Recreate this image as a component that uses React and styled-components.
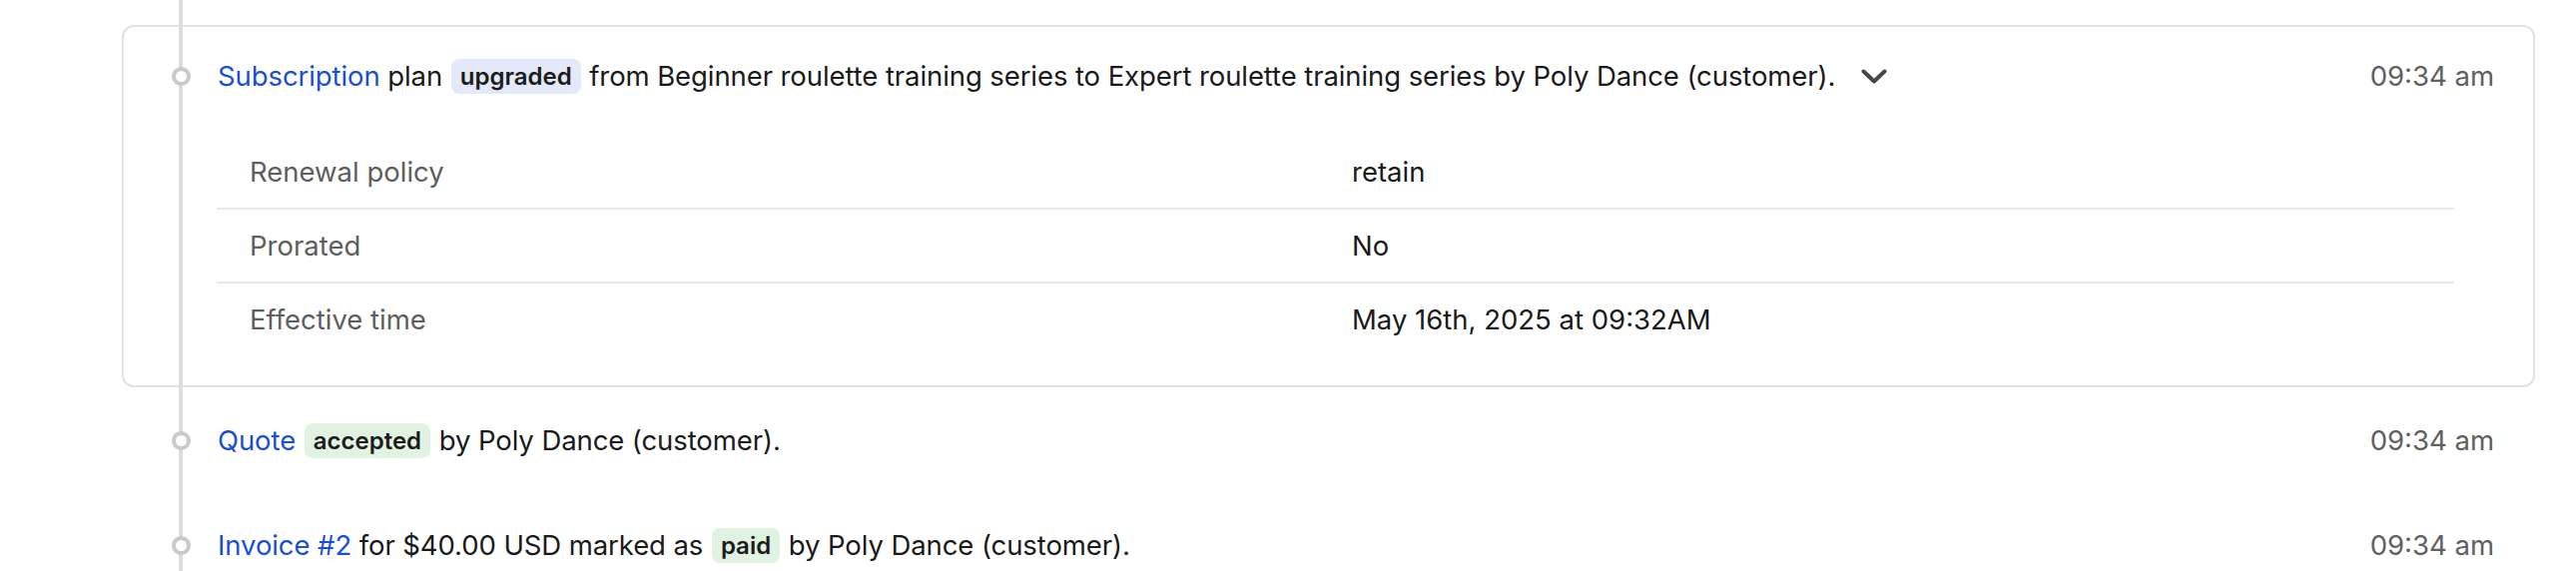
import styled, { createGlobalStyle } from 'styled-components';

const Global = createGlobalStyle`
  body {
    margin: 0;
    background: #fff;
    font-family: Inter, "Noto Sans", "Liberation Sans", sans-serif;
    color: #1a1a1a;
  }
`;

const details = [
  { label: 'Renewal policy', value: 'retain' },
  { label: 'Prorated', value: 'No' },
  { label: 'Effective time', value: 'May 16th, 2025 at 09:32AM' },
];

function Chevron() {
  return (
    <ChevronIcon width="26" height="16" viewBox="0 0 26 16" aria-hidden="true">
      <polyline points="2.5,2.5 13,12.5 23.5,2.5" fill="none" stroke="#474747" strokeWidth="4" strokeLinecap="round" strokeLinejoin="round" />
    </ChevronIcon>
  );
}

// One line of the activity feed: dot on the rail, message, time on the right.
function EventRow({ inset = 0, time, children }) {
  return (
    <Row $inset={inset}>
      <Rail $inset={inset}>
        <Dot />
      </Rail>
      <Message>{children}</Message>
      <Time>{time}</Time>
    </Row>
  );
}

export default function App() {
  return (
    <>
      <Global />
      <Page>
        <Timeline>
          <Card>
            <EventRow inset={2} time="09:34 am">
              <Link>Subscription</Link> plan <Badge $tone="blue">upgraded</Badge> from Beginner roulette training series to
              Expert roulette training series by Poly Dance (customer).
              <Chevron />
            </EventRow>
            <Details>
              {details.map((d) => (
                <DetailRow key={d.label}>
                  <DetailLabel>{d.label}</DetailLabel>
                  <DetailValue>{d.value}</DetailValue>
                </DetailRow>
              ))}
            </Details>
          </Card>

          <Item>
            <EventRow time="09:34 am">
              <Link>Quote</Link> <Badge $tone="green">accepted</Badge> by Poly Dance (customer).
            </EventRow>
          </Item>
          <Item>
            <EventRow time="09:34 am">
              <Link>Invoice #2</Link> for $40.00 USD marked as <Badge $tone="green">paid</Badge> by Poly Dance (customer).
            </EventRow>
          </Item>
        </Timeline>
      </Page>
    </>
  );
}

const Page = styled.div`
  padding: 0 41px 0 122px;
  height: 572px;
  overflow: hidden;
`;

const Timeline = styled.div`
  position: relative;
  padding-top: 25px;

  &::before {
    content: '';
    position: absolute;
    left: 57px;
    top: 0;
    bottom: 0;
    width: 4px;
    background: #dcdcdc;
  }
`;

const Card = styled.div`
  border: 2px solid #e2e2e2;
  border-radius: 12px;
  padding: 31px 0 30px;
`;

const Item = styled.div`
  padding: 35px 0 34px;
`;

const Row = styled.div`
  display: grid;
  grid-template-columns: ${(p) => 96 - p.$inset}px 1fr auto;
  align-items: center;
  padding-right: ${(p) => 41 - p.$inset}px;
  min-height: 36px;
  font-size: 27.5px;
  line-height: 36px;
`;

const Rail = styled.div`
  display: flex;
  align-items: center;
  padding-left: ${(p) => 49.5 - p.$inset}px;
`;

const Dot = styled.span`
  position: relative;
  z-index: 1;
  box-sizing: border-box;
  width: 19px;
  height: 19px;
  border-radius: 50%;
  border: 4px solid #c9c9c9;
  background: #fff;
`;

const Message = styled.div`
  color: #1a1a1a;
  white-space: nowrap;
  letter-spacing: -0.09px;
`;

const Link = styled.span`
  color: #1a4fd3;
`;

const Badge = styled.span`
  display: inline-block;
  vertical-align: middle;
  margin: -4px 1px 0;
  padding: 0 9px;
  height: 35px;
  line-height: 35px;
  border-radius: 8px;
  font-size: 24px;
  font-weight: 600;
  letter-spacing: 0;
  color: #1c1c1c;
  background: ${(p) => (p.$tone === 'green' ? '#e0f3e0' : '#e3e9f8')};
`;

const ChevronIcon = styled.svg`
  display: inline-block;
  vertical-align: middle;
  margin: -4px 0 0 26px;
`;

const Time = styled.div`
  color: #606060;
  text-align: right;
`;

const Details = styled.div`
  margin: 42px 79px 0 93px;
`;

const DetailRow = styled.div`
  display: grid;
  grid-template-columns: 1137px 1fr;
  align-items: center;
  height: 72px;
  font-size: 27.5px;
  border-bottom: 2px solid #e8e8e8;

  &:last-child {
    border-bottom: none;
  }
`;

const DetailLabel = styled.div`
  padding-left: 33px;
  color: #5e5e5e;
`;

const DetailValue = styled.div`
  color: #1a1a1a;
`;
